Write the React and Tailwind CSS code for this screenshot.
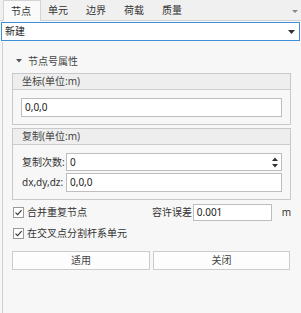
import React from 'react';

const tabs = ['节点', '单元', '边界', '荷载', '质量'];

function Check() {
  return (
    <span className="w-[11px] h-[11px] border border-[#9a9a9a] bg-white flex items-center justify-center">
      <svg width="9" height="9" viewBox="0 0 9 9">
        <path d="M1.5 4.6 L3.6 6.7 L7.6 2.2" fill="none" stroke="#333" strokeWidth="1.1" />
      </svg>
    </span>
  );
}

function Group({ title, children }) {
  return (
    <div className="border border-[#c9c9c9]">
      <div className="h-[16px] bg-[#eeeeee] border-b border-[#cdcdcd] flex items-center pl-[9px] text-[#444]">{title}</div>
      <div className="px-[8px] pt-[8px] pb-[7px]">{children}</div>
    </div>
  );
}

export default function App() {
  return (
    <div
      className="w-[301px] h-[313px] bg-[#f7f7f7] overflow-hidden text-[10px] text-[#333] flex flex-col"
      style={{ fontFamily: '"Noto Sans", "Noto Sans CJK SC", sans-serif' }}
    >
      {/* tab strip */}
      <div className="h-[21px] bg-[#f0f0f0] border-b border-[#d4d4d4] flex items-end pl-[3px] relative">
        {tabs.map((t, i) => (
          <div
            key={t}
            className={`w-[38px] h-[20px] pl-[7px] flex items-center ${i === 0 ? 'bg-[#fafafa] border border-b-0 border-[#d4d4d4] -mb-px h-[21px]' : ''}`}
          >
            {t}
          </div>
        ))}
        <svg className="absolute right-[3px] top-[10px]" width="6" height="4" viewBox="0 0 6 4">
          <path d="M0 0 H6 L3 3 Z" fill="#888" />
        </svg>
      </div>

      {/* combo */}
      <div className="mx-[1px] mt-[1px] h-[19px] bg-white border border-[#3d8fd8] flex items-center justify-between pl-[3px] pr-[4px] text-[#222]">
        <span>新建</span>
        <svg width="7" height="4" viewBox="0 0 7 4">
          <path d="M0 0 H7 L3.5 4 Z" fill="#333" />
        </svg>
      </div>

      {/* body */}
      <div className="flex-1 ml-[2px] mt-[1px] border-l border-[#cfcfcf] pl-[9px] pr-[10px]">
        <div className="h-[30px] flex items-center pt-[8px] pl-[4px] gap-[6px] text-[#444]">
          <svg width="6" height="4" viewBox="0 0 6 4">
            <path d="M0 0 H6 L3 3.5 Z" fill="#555" />
          </svg>
          <span>节点号属性</span>
        </div>

        <div className="mt-[1px]">
          <Group title="坐标(单位:m)">
            <div className="h-[19px] bg-white border border-[#bdbdbd] flex items-center pl-[3px] text-[#222]">0,0,0</div>
          </Group>
        </div>

        <div className="mt-[3px]">
          <Group title="复制(单位:m)">
            <div className="flex flex-col gap-[2px]">
              <div className="flex items-center">
                <span className="w-[45px] pl-[1px]">复制次数:</span>
                <div className="flex-1 h-[18px] bg-white border border-[#bdbdbd] flex items-center justify-between pl-[3px] pr-[3px] text-[#222]">
                  <span>0</span>
                  <svg width="6" height="11" viewBox="0 0 6 11">
                    <path d="M0 4 H6 L3 0.5 Z" fill="#333" />
                    <path d="M0 7 H6 L3 10.5 Z" fill="#333" />
                  </svg>
                </div>
              </div>
              <div className="flex items-center">
                <span className="w-[45px] pl-[1px]">dx,dy,dz:</span>
                <div className="flex-1 h-[19px] bg-white border border-[#bdbdbd] flex items-center pl-[3px] text-[#222]">0,0,0</div>
              </div>
            </div>
          </Group>
        </div>

        <div className="mt-[4px] h-[17px] flex items-center">
          <div className="flex items-center gap-[3px] pl-[1px] w-[144px]">
            <Check />
            <span>合并重复节点</span>
          </div>
          <span className="w-[42px]">容许误差</span>
          <div className="w-[81px] h-[17px] bg-white border border-[#bdbdbd] flex items-center pl-[3px] text-[#222]">0.001</div>
          <span className="ml-[10px]">m</span>
        </div>

        <div className="mt-[5px] h-[14px] flex items-center gap-[3px] pl-[1px]">
          <Check />
          <span>在交叉点分割杆系单元</span>
        </div>

        <div className="mt-[11px] flex gap-[3px]">
          <button className="w-[138px] h-[19px] bg-[#fdfdfd] border border-[#cccccc] text-[#444] flex items-center justify-center">适用</button>
          <button className="w-[137px] h-[19px] bg-[#fdfdfd] border border-[#cccccc] text-[#444] flex items-center justify-center">关闭</button>
        </div>
      </div>
    </div>
  );
}
